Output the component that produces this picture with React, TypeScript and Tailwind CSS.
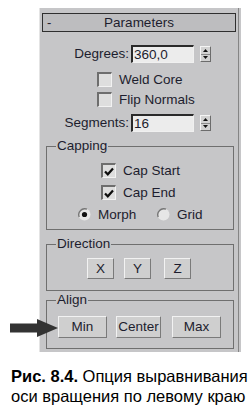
import React from "react";

const txt = "text-[#1d1d2e]";

function Spinner() {
  return (
    <div className="ml-[6px] w-[11px] h-[16px] flex flex-col border border-t-[#f4f4f4] border-l-[#f4f4f4] border-b-[#6c6c6c] border-r-[#6c6c6c] bg-[#d2d2d2]">
      <div className="flex-1 flex items-center justify-center border-b border-[#8a8a8a]">
        <svg width="5" height="3" viewBox="0 0 5 3"><path d="M2.5 0 L5 3 L0 3 Z" fill="#111" /></svg>
      </div>
      <div className="flex-1 flex items-center justify-center">
        <svg width="5" height="3" viewBox="0 0 5 3"><path d="M0 0 L5 0 L2.5 3 Z" fill="#111" /></svg>
      </div>
    </div>
  );
}

function NumField({ label, value }: { label: string; value: string }) {
  return (
    <div className="flex items-center h-[18px]">
      <span className={`w-[91px] text-right pr-[2px] text-[13.5px] leading-none ${txt}`}>{label}</span>
      <div className="w-[63px] h-[18px] border-t-2 border-l-2 border-t-[#2a2a2a] border-l-[#2a2a2a] border-b border-r border-b-[#f0f0f0] border-r-[#f0f0f0] bg-[#ececec] flex items-center pl-[1px]">
        <span className={`text-[13.5px] leading-none ${txt}`}>{value}</span>
      </div>
      <Spinner />
    </div>
  );
}

function Check({ checked, label }: { checked?: boolean; label: string }) {
  return (
    <div className="flex items-center h-[15px]">
      <div className="w-[15px] h-[15px] border-t-2 border-l-2 border-t-[#6e6e6e] border-l-[#6e6e6e] border-b border-r border-b-[#f2f2f2] border-r-[#f2f2f2] bg-[#dedede] flex items-center justify-center">
        {checked && (
          <svg width="10" height="9" viewBox="0 0 10 9">
            <path d="M1 4.5 L3.8 7.3 L9 1.5" stroke="#0d0d0d" strokeWidth="2.2" fill="none" />
          </svg>
        )}
      </div>
      <span className={`ml-[7px] text-[13.5px] leading-none ${txt}`}>{label}</span>
    </div>
  );
}

function Radio({ on }: { on?: boolean }) {
  return (
    <svg width="13" height="13" viewBox="0 0 13 13">
      <circle cx="6.5" cy="6.5" r="6" fill="#e6e6e6" />
      <path d="M1.2 9 A6 6 0 0 1 9 1.2" stroke="#777" strokeWidth="1.4" fill="none" />
      {on && <circle cx="6.5" cy="6.5" r="2.6" fill="#111" />}
    </svg>
  );
}

function Btn({ label, w, h }: { label: string; w: string; h: string }) {
  return (
    <div
      className={`${w} ${h} flex items-center justify-center bg-[#cfcfcf] border border-t-[#f2f2f2] border-l-[#f2f2f2] border-b-[#7a7a7a] border-r-[#7a7a7a] text-[13.5px] leading-none ${txt}`}
    >
      {label}
    </div>
  );
}

function Group({ title, className, children }: { title: string; className: string; children: React.ReactNode }) {
  return (
    <fieldset className={`ml-[6px] w-[188px] border border-[#6f6f6f] ${className}`}>
      <legend className={`ml-[9px] px-[1px] text-[13.5px] leading-[14px] ${txt}`}>{title}</legend>
      {children}
    </fieldset>
  );
}

export default function App() {
  return (
    <div
      className="relative w-[251px] h-[408px] bg-white overflow-hidden"
      style={{ fontFamily: '"Liberation Sans", Arial, sans-serif' }}
    >
      <div className="pt-[8px]">
        <div className="ml-[39px] w-[202px] h-[344px] bg-[#c6c6c8] border-l border-[#e4e4e4] pr-[2px]">
          <div className="h-full border-r border-[#858585] pt-[5px]">
            {/* Title bar */}
            <div className="ml-[2px] w-[194px] h-[19px] border border-[#2f2f2f] bg-[#bdbdbf] flex items-center relative">
              <span className={`ml-[4px] text-[13px] leading-none ${txt}`}>-</span>
              <span className={`absolute inset-0 flex items-center justify-center text-[13.5px] leading-none ${txt}`}>
                Parameters
              </span>
            </div>

            <div className="mt-[13px]">
              <NumField label="Degrees:" value="360,0" />
            </div>
            <div className="mt-[9px] ml-[57px]">
              <Check label="Weld Core" />
            </div>
            <div className="mt-[5px] ml-[57px]">
              <Check label="Flip Normals" />
            </div>
            <div className="mt-[7px]">
              <NumField label="Segments:" value="16" />
            </div>

            <Group title="Capping" className="mt-[7px] pt-[10px] pb-[8px]">
              <div className="ml-[54px]">
                <Check checked label="Cap Start" />
              </div>
              <div className="mt-[7px] ml-[54px]">
                <Check checked label="Cap End" />
              </div>
              <div className="mt-[8px] ml-[31px] flex items-center h-[13px]">
                <div className="w-[79px] flex items-center">
                  <Radio on />
                  <span className={`ml-[7px] text-[13.5px] leading-none ${txt}`}>Morph</span>
                </div>
                <Radio />
                <span className={`ml-[7px] text-[13.5px] leading-none ${txt}`}>Grid</span>
              </div>
            </Group>

            <Group title="Direction" className="mt-[7px] pt-[7px] pb-[11px]">
              <div className="ml-[40px] flex">
                <Btn label="X" w="w-[27px]" h="h-[21px]" />
                <div className="ml-[10px]">
                  <Btn label="Y" w="w-[27px]" h="h-[21px]" />
                </div>
                <div className="ml-[13px]">
                  <Btn label="Z" w="w-[27px]" h="h-[21px]" />
                </div>
              </div>
            </Group>

            <Group title="Align" className="mt-[2px] pt-[9px] pb-[10px]">
              <div className="ml-[11px] flex">
                <Btn label="Min" w="w-[49px]" h="h-[22px]" />
                <div className="ml-[9px]">
                  <Btn label="Center" w="w-[45px]" h="h-[22px]" />
                </div>
                <div className="ml-[11px]">
                  <Btn label="Max" w="w-[49px]" h="h-[22px]" />
                </div>
              </div>
            </Group>
          </div>
        </div>

        <div className="mt-[14px] pl-[11px] text-[16.5px] leading-[20px] text-black whitespace-nowrap">
          <div>
            <b>Рис. 8.4.</b> Опция выравнивания
          </div>
          <div>оси вращения по левому краю</div>
        </div>
      </div>

      {/* Arrow annotation pointing at Min */}
      <svg className="absolute left-[10px] top-[319px]" width="49" height="18" viewBox="0 0 49 18">
        <path d="M0 4.5 H27 V0 L48 9 L27 18 V13.5 H0 Z" fill="#333" />
      </svg>
    </div>
  );
}
